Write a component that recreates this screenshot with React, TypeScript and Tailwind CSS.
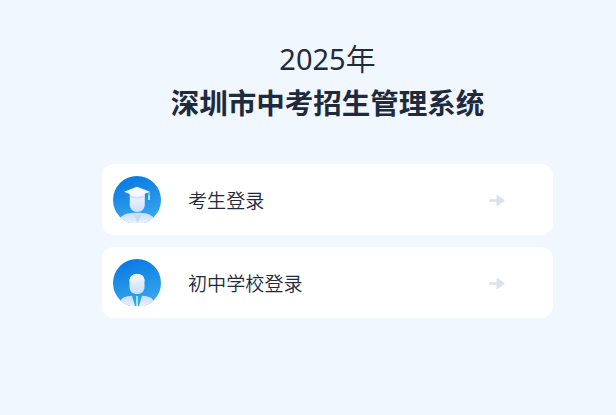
import type { ReactNode } from "react";

function AvatarBase({ id, children }: { id: string; children: ReactNode }) {
  return (
    <svg viewBox="0 0 48 48" className="h-12 w-12 shrink-0">
      <defs>
        <linearGradient id={`${id}-bg`} x1="0.3" y1="0" x2="0.6" y2="1">
          <stop offset="0" stopColor="#0878e3" />
          <stop offset="1" stopColor="#3aaaec" />
        </linearGradient>
        <linearGradient id={`${id}-face`} x1="0" y1="0" x2="0" y2="1">
          <stop offset="0" stopColor="#f4f7ff" />
          <stop offset="1" stopColor="#c9defc" />
        </linearGradient>
        <linearGradient id={`${id}-body`} x1="0" y1="0" x2="0" y2="1">
          <stop offset="0" stopColor="#c6dcfd" />
          <stop offset="1" stopColor="#edf4ff" />
        </linearGradient>
        <clipPath id={`${id}-clip`}>
          <path d="M0 0h48v47H0z" />
        </clipPath>
        <clipPath id={`${id}-round`}>
          <circle cx="24" cy="24" r="24" />
        </clipPath>
      </defs>
      <g clipPath={`url(#${id}-clip)`}>
        <g clipPath={`url(#${id}-round)`}>
          <path d="M0 0h48v48H0z" fill={`url(#${id}-bg)`} />
          {children}
        </g>
      </g>
    </svg>
  );
}

function StudentAvatar() {
  return (
    <AvatarBase id="student">
      <path d="M7.500 42c2.500-4 8.500-5.200 16.500-5.200S38 38 40.500 42v6h-33z" fill="url(#student-body)" />
      <path d="M21 39h7l-3.500 8z" fill="#c3d8fb" />
      <path d="M16.800 18h15v10.500c0 4.500-3 7.500-7.500 7.500s-7.500-3-7.500-7.500z" fill="url(#student-face)" />
      <path d="M16.800 19.500l7.500 1.500 7.500-1.500V21l-4.500 1.200-3 .8-3-.8-4.500-1.200z" fill="#cbdffb" />
      <path d="M11 15.700L24 10.800l13 4.900-13 5.300z" fill="#f4f8ff" />
      <path d="M36 16v4" stroke="#b9e4ff" strokeWidth="1" />
      <path d="M35 19.500h2V24h-2z" fill="#8af6f8" />
    </AvatarBase>
  );
}

function SchoolAvatar() {
  return (
    <AvatarBase id="school">
      <path d="M7.500 42c1.500-3.500 5-4.800 11.500-5.200l3.200 11H7.500z" fill="url(#school-body)" />
      <path d="M40.500 42c-1.500-3.500-5-4.800-11.500-5.200l-3.200 11h14.700z" fill="url(#school-body)" />
      <path d="M23 37h2v11h-2z" fill="#84f2f6" />
      <path d="M16.500 22c0-4.500 3-7 7.500-7s7.500 2.500 7.500 7v5.500c0 5-3 7.500-7.500 7.500s-7.500-2.500-7.500-7.500z" fill="url(#school-face)" />
      <path d="M16.500 22.500c3 .5 7.500.5 9.500-1.500 1 1 3 1.500 5.500 1.200C31.500 17.500 28.500 15 24 15s-7.500 2.500-7.500 7.500z" fill="#edf3ff" />
    </AvatarBase>
  );
}

function ArrowIcon() {
  return (
    <svg viewBox="0 0 16 12" className="h-3 w-4">
      <path d="M1.300 6.500H8" stroke="#d9e3eb" strokeWidth="2.600" strokeLinecap="round" />
      <path d="M8.300 1.800l6.500 4.700-6.500 4.700z" fill="#d9e3eb" stroke="#d9e3eb" strokeWidth="1.600" strokeLinejoin="round" />
    </svg>
  );
}

const ENTRIES = [
  { label: "考生登录", avatar: <StudentAvatar /> },
  { label: "初中学校登录", avatar: <SchoolAvatar /> },
];

export default function App() {
  return (
    <main className="h-screen overflow-hidden bg-[#f0f7ff] pt-[37px] font-['Noto_Sans','Noto_Sans_CJK_SC',sans-serif] text-[#1f2a3c]">
      <div className="ml-[102px] w-[451px]">
        <h1 className="text-center leading-[44px]">
          <span className="block h-11 text-[29px] font-normal">
            2025<span className="text-[30px] font-[350]">年</span>
          </span>
          <span className="block text-[28.500px] font-bold">深圳市中考招生管理系统</span>
        </h1>

        <div className="mt-[39px] flex flex-col gap-3">
          {ENTRIES.map(entry => (
            <button key={entry.label} className="flex h-[71px] w-full items-center rounded-xl bg-white pl-[11px] pr-12">
              {entry.avatar}
              <span className="ml-[27px] flex-1 pt-0.5 text-left text-[19.100px] font-[350] leading-7">{entry.label}</span>
              <ArrowIcon />
            </button>
          ))}
        </div>
      </div>
    </main>
  );
}
